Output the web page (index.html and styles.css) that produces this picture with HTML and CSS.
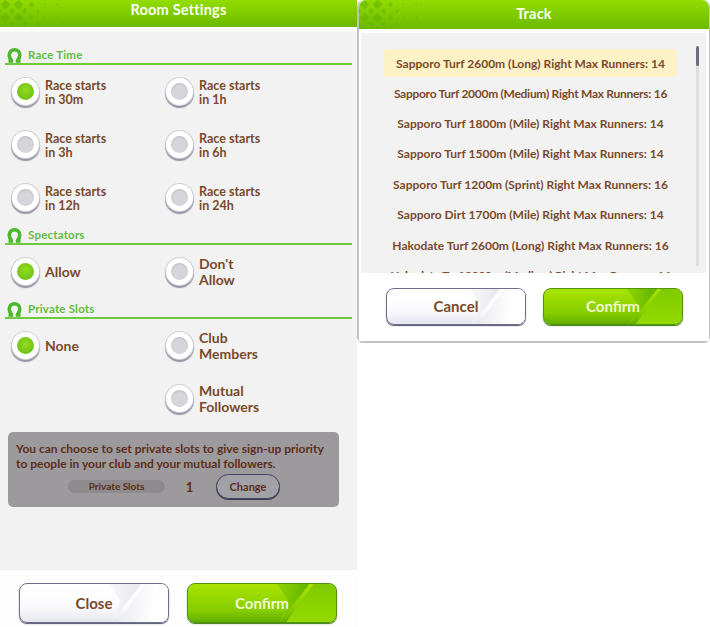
FILE: index.html
```html
<!DOCTYPE html>
<html lang="en">
<head>
<meta charset="utf-8">
<title>Room Settings</title>
<link rel="stylesheet" href="styles.css">
</head>
<body>
<svg class="defs" width="0" height="0" aria-hidden="true">
  <defs>
    <pattern id="dia-l" width="13" height="13" patternUnits="userSpaceOnUse" patternTransform="translate(-1 -2)">
      <path d="M6.5 1.5 11.5 6.5 6.5 11.5 1.5 6.5Z M0 -3 3 0 0 3 -3 0Z M13 -3 16 0 13 3 10 0Z M0 10 3 13 0 16 -3 13Z M13 10 16 13 13 16 10 13Z" fill="#5fb400" fill-opacity=".55"/>
    </pattern>
    <pattern id="dia-m" width="13" height="13" patternUnits="userSpaceOnUse" patternTransform="translate(-1 -2)">
      <path d="M6.5 3.5 9.5 6.5 6.5 9.5 3.5 6.5Z M0 -2 2 0 0 2 -2 0Z M13 -2 15 0 13 2 11 0Z M0 11 2 13 0 15 -2 13Z M13 11 15 13 13 15 11 13Z" fill="#5fb400" fill-opacity=".5"/>
    </pattern>
    <pattern id="dia-s" width="13" height="13" patternUnits="userSpaceOnUse" patternTransform="translate(-1 -2)">
      <path d="M6.5 5 8 6.5 6.5 8 5 6.5Z" fill="#5fb400" fill-opacity=".4"/>
    </pattern>
    <symbol id="shoe" viewBox="0 0 15 15">
      <path d="M4.800 13C3 11 2.200 9.300 2.200 7.300 2.200 4 4.500 1.800 7.500 1.800S12.800 4 12.800 7.300C12.800 9.300 12 11 10.200 13" fill="none" stroke="#4fb82a" stroke-width="3.600"/>
      <path d="M1.500 12H6.200V14.800H1.500ZM8.800 12H13.500V14.800H8.800Z" fill="#4fb82a"/>
    </symbol>
    <symbol id="pattern" viewBox="0 0 70 30">
      <rect x="0" y="0" width="26" height="30" fill="url(#dia-l)"/>
      <rect x="26" y="0" width="14" height="30" fill="url(#dia-m)"/>
      <rect x="40" y="0" width="26" height="30" fill="url(#dia-s)"/>
    </symbol>
  </defs>
</svg>

<main class="screen">
  <section class="room">
    <header class="title title-room">
      <svg class="title-art" width="70" height="30"><use href="#pattern"/></svg>
      <h1>Room Settings</h1>
    </header>
    <div class="room-body">
      <div class="group">
        <h2 class="group-head"><svg class="shoe"><use href="#shoe"/></svg>Race Time</h2>
        <div class="options">
          <div class="opt"><span class="radio on"></span><span>Race starts<br>in 30m</span></div>
          <div class="opt"><span class="radio"></span><span>Race starts<br>in 1h</span></div>
          <div class="opt"><span class="radio"></span><span>Race starts<br>in 3h</span></div>
          <div class="opt"><span class="radio"></span><span>Race starts<br>in 6h</span></div>
          <div class="opt"><span class="radio"></span><span>Race starts<br>in 12h</span></div>
          <div class="opt"><span class="radio"></span><span>Race starts<br>in 24h</span></div>
        </div>
      </div>
      <div class="group">
        <h2 class="group-head"><svg class="shoe"><use href="#shoe"/></svg>Spectators</h2>
        <div class="options">
          <div class="opt big"><span class="radio on"></span><span>Allow</span></div>
          <div class="opt big"><span class="radio"></span><span>Don't<br>Allow</span></div>
        </div>
      </div>
      <div class="group">
        <h2 class="group-head"><svg class="shoe"><use href="#shoe"/></svg>Private Slots</h2>
        <div class="options">
          <div class="opt big"><span class="radio on"></span><span>None</span></div>
          <div class="opt big"><span class="radio"></span><span>Club<br>Members</span></div>
          <div class="opt big opt-second"><span class="radio"></span><span>Mutual<br>Followers</span></div>
        </div>
      </div>
      <div class="notice">
        <p>You can choose to set private slots to give sign-up priority<br>to people in your club and your mutual followers.</p>
        <div class="notice-row">
          <span class="pill">Private Slots</span>
          <span class="count">1</span>
          <span class="change">Change</span>
        </div>
      </div>
    </div>
    <footer class="actions actions-room">
      <button class="btn btn-white">Close</button>
      <button class="btn btn-green">Confirm</button>
    </footer>
  </section>

  <section class="track">
    <header class="title title-track">
      <svg class="title-art" width="70" height="30"><use href="#pattern"/></svg>
      <h1>Track</h1>
    </header>
    <div class="track-body">
      <ul class="list">
        <li class="sel">Sapporo Turf 2600m (Long) Right Max Runners: 14</li>
        <li class="tight">Sapporo Turf 2000m (Medium) Right Max Runners: 16</li>
        <li>Sapporo Turf 1800m (Mile) Right Max Runners: 14</li>
        <li>Sapporo Turf 1500m (Mile) Right Max Runners: 14</li>
        <li>Sapporo Turf 1200m (Sprint) Right Max Runners: 16</li>
        <li>Sapporo Dirt 1700m (Mile) Right Max Runners: 14</li>
        <li>Hakodate Turf 2600m (Long) Right Max Runners: 16</li>
        <li class="tight">Hakodate Turf 2000m (Medium) Right Max Runners: 16</li>
      </ul>
      <div class="scroll"><span class="thumb"></span></div>
    </div>
    <footer class="actions actions-track">
      <button class="btn btn-white">Cancel</button>
      <button class="btn btn-green">Confirm</button>
    </footer>
  </section>
</main>
</body>
</html>
```
FILE: styles.css
```css
* { box-sizing: border-box; }
html, body { margin: 0; padding: 0; background: #fff; }
body { width: 710px; height: 627px; overflow: hidden; font-family: "Lato", "Noto Sans", sans-serif; color: #7a4a2b; }
.defs { position: absolute; }
.screen { display: flex; align-items: flex-start; height: 627px; }

/* title bars */
.title { position: relative; display: flex; align-items: center; justify-content: center; background: linear-gradient(#93dc00, #6cb900); overflow: hidden; }
.title h1 { margin: 0; font-size: 14.500px; font-weight: 700; color: #fafff0; letter-spacing: .2px; }
.title-art { position: absolute; left: 0; top: 0; }
.title-room { height: 27px; padding-bottom: 8px; }
.title-track { height: 29px; padding-bottom: 2px; border-radius: 7px 7px 0 0; }

/* left panel */
.room { width: 357px; height: 627px; display: flex; flex-direction: column; }
.room-body { flex: 1; background: #f2f2f2; border-top: 5px solid #fbfbfb; padding: 17px 5px 0 5px; }
.group + .group { margin-top: 5px; }
.group-head { display: flex; align-items: flex-start; gap: 6px; height: 16px; margin: 0; padding-left: 2px; border-bottom: 2px solid #6fc93a; font-size: 11.500px; font-weight: 700; line-height: 12px; color: #63bd3c; letter-spacing: .2px; }
.shoe { width: 15px; height: 15px; margin-top: -1px; flex: none; }
.options { display: grid; grid-template-columns: 154px 154px; grid-auto-rows: 53px; padding-left: 7px; }
.opt { display: flex; align-items: center; gap: 6px; font-size: 12.500px; font-weight: 700; line-height: 14px; }
.opt > span:last-child { padding-top: 3px; }
.opt.big { font-size: 14px; line-height: 16px; }
.opt.big > span:last-child { padding-top: 0; }
.opt-second { grid-column: 2; }
.radio { width: 27px; height: 27px; flex: none; border-radius: 50%; background: #d5d5db; border: 5px solid #fff; box-shadow: 0 0 0 1px #cfcfd6, 0 2px 1px 1px #9494a6, inset 0 1px 2px #b9b9c2; }
.radio.on { background: radial-gradient(circle at 50% 40%, #93dc22, #64b90f); box-shadow: 0 0 0 1px #cfcfd6, 0 2px 1px 1px #9494a6; }

/* notice box */
.notice { width: 331px; height: 75px; margin: 7px 0 0 3px; padding: 9px 8px 0 8px; border-radius: 5px; background: #9d9a9e; color: #5a2f17; }
.notice p { margin: 0; font-size: 12px; font-weight: 700; line-height: 15px; }
.notice-row { display: flex; align-items: center; margin: 3px 0 0 52px; }
.pill { width: 97px; height: 13px; border-radius: 7px; background: #8e8a8d; font-size: 10px; font-weight: 700; line-height: 13px; text-align: center; }
.count { width: 49px; margin-right: 2px; font-size: 13px; font-weight: 700; text-align: center; }
.change { width: 64px; height: 25px; border-radius: 13px; border: 1px solid #45455f; box-shadow: 0 1px 0 #3c3c55; background: #a3a1a8; font-size: 11px; font-weight: 700; line-height: 24px; text-align: center; }

/* footers and buttons */
.actions { display: flex; background: #fff; }
.actions-room { height: 57px; padding: 13px 0 0 19px; gap: 18px; background: #fdfdfd; }
.actions-track { height: 68px; padding: 15px 0 0 27px; gap: 17px; }
.btn { position: relative; isolation: isolate; overflow: hidden; border-radius: 8px; font: 700 15px "Lato", "Noto Sans", sans-serif; padding: 0; }
.actions-room .btn { width: 150px; height: 40px; }
.actions-track .btn { width: 140px; height: 37px; padding-bottom: 2px; }
.btn-white { color: #7a4a2b; border: 1px solid #6e6e8c; box-shadow: 0 1px 1px #55556f; background: linear-gradient(#fff, #fbfbfd 60%, #e6e5ef); }
.btn-green { color: #effbd2; border: 1px solid #4f9410; box-shadow: 0 1px 1px #3c7a0c; background: linear-gradient(#a8e400, #86cc00 70%, #62ae00); }
.btn::before { content: ""; position: absolute; z-index: -1; inset: 0 0 0 62%; clip-path: polygon(60% 0, 100% 0, 100% 100%, 12% 100%); }
.btn-white::before { background: linear-gradient(95deg, #e6e5ec, #fff 75%); }
.btn-green::before { background: linear-gradient(#7fca00, #95da00); }
.btn::after { content: ""; position: absolute; z-index: -1; inset: 0 0 0 60%; clip-path: polygon(0 0, 55% 0, 5% 100%, 20% 45%); }
.btn-white::after { background: linear-gradient(95deg, #f8f8fa, #d8d7e0); }
.btn-green::after { background: linear-gradient(100deg, #92d600, #5cb000 55%, #439c00); }

/* right panel */
.track { position: relative; width: 353px; height: 343px; background: #fff; border: solid #c2c2c2; border-width: 0 1px 2px 2px; border-radius: 7px 7px 6px 6px; display: flex; flex-direction: column; }
.track-body { position: relative; height: 240px; margin: 4px 3px 0 2px; background: #f2f2f2; overflow: hidden; padding-top: 16px; }
.list { list-style: none; margin: 0 0 0 23px; padding: 0; width: 293px; }
.list li { height: 30.400px; display: flex; align-items: center; justify-content: center; font-size: 12px; font-weight: 700; white-space: nowrap; }
.list li.sel { height: 28px; margin-bottom: 1px; background: #fdf1c6; border-radius: 4px; }
.list li.tight { letter-spacing: -.28px; }
.scroll { position: absolute; left: 335px; top: 13px; width: 3px; height: 220px; border-radius: 2px; background: #dedede; }
.thumb { display: block; height: 20px; border-radius: 2px; background: #6c6c82; }
```
